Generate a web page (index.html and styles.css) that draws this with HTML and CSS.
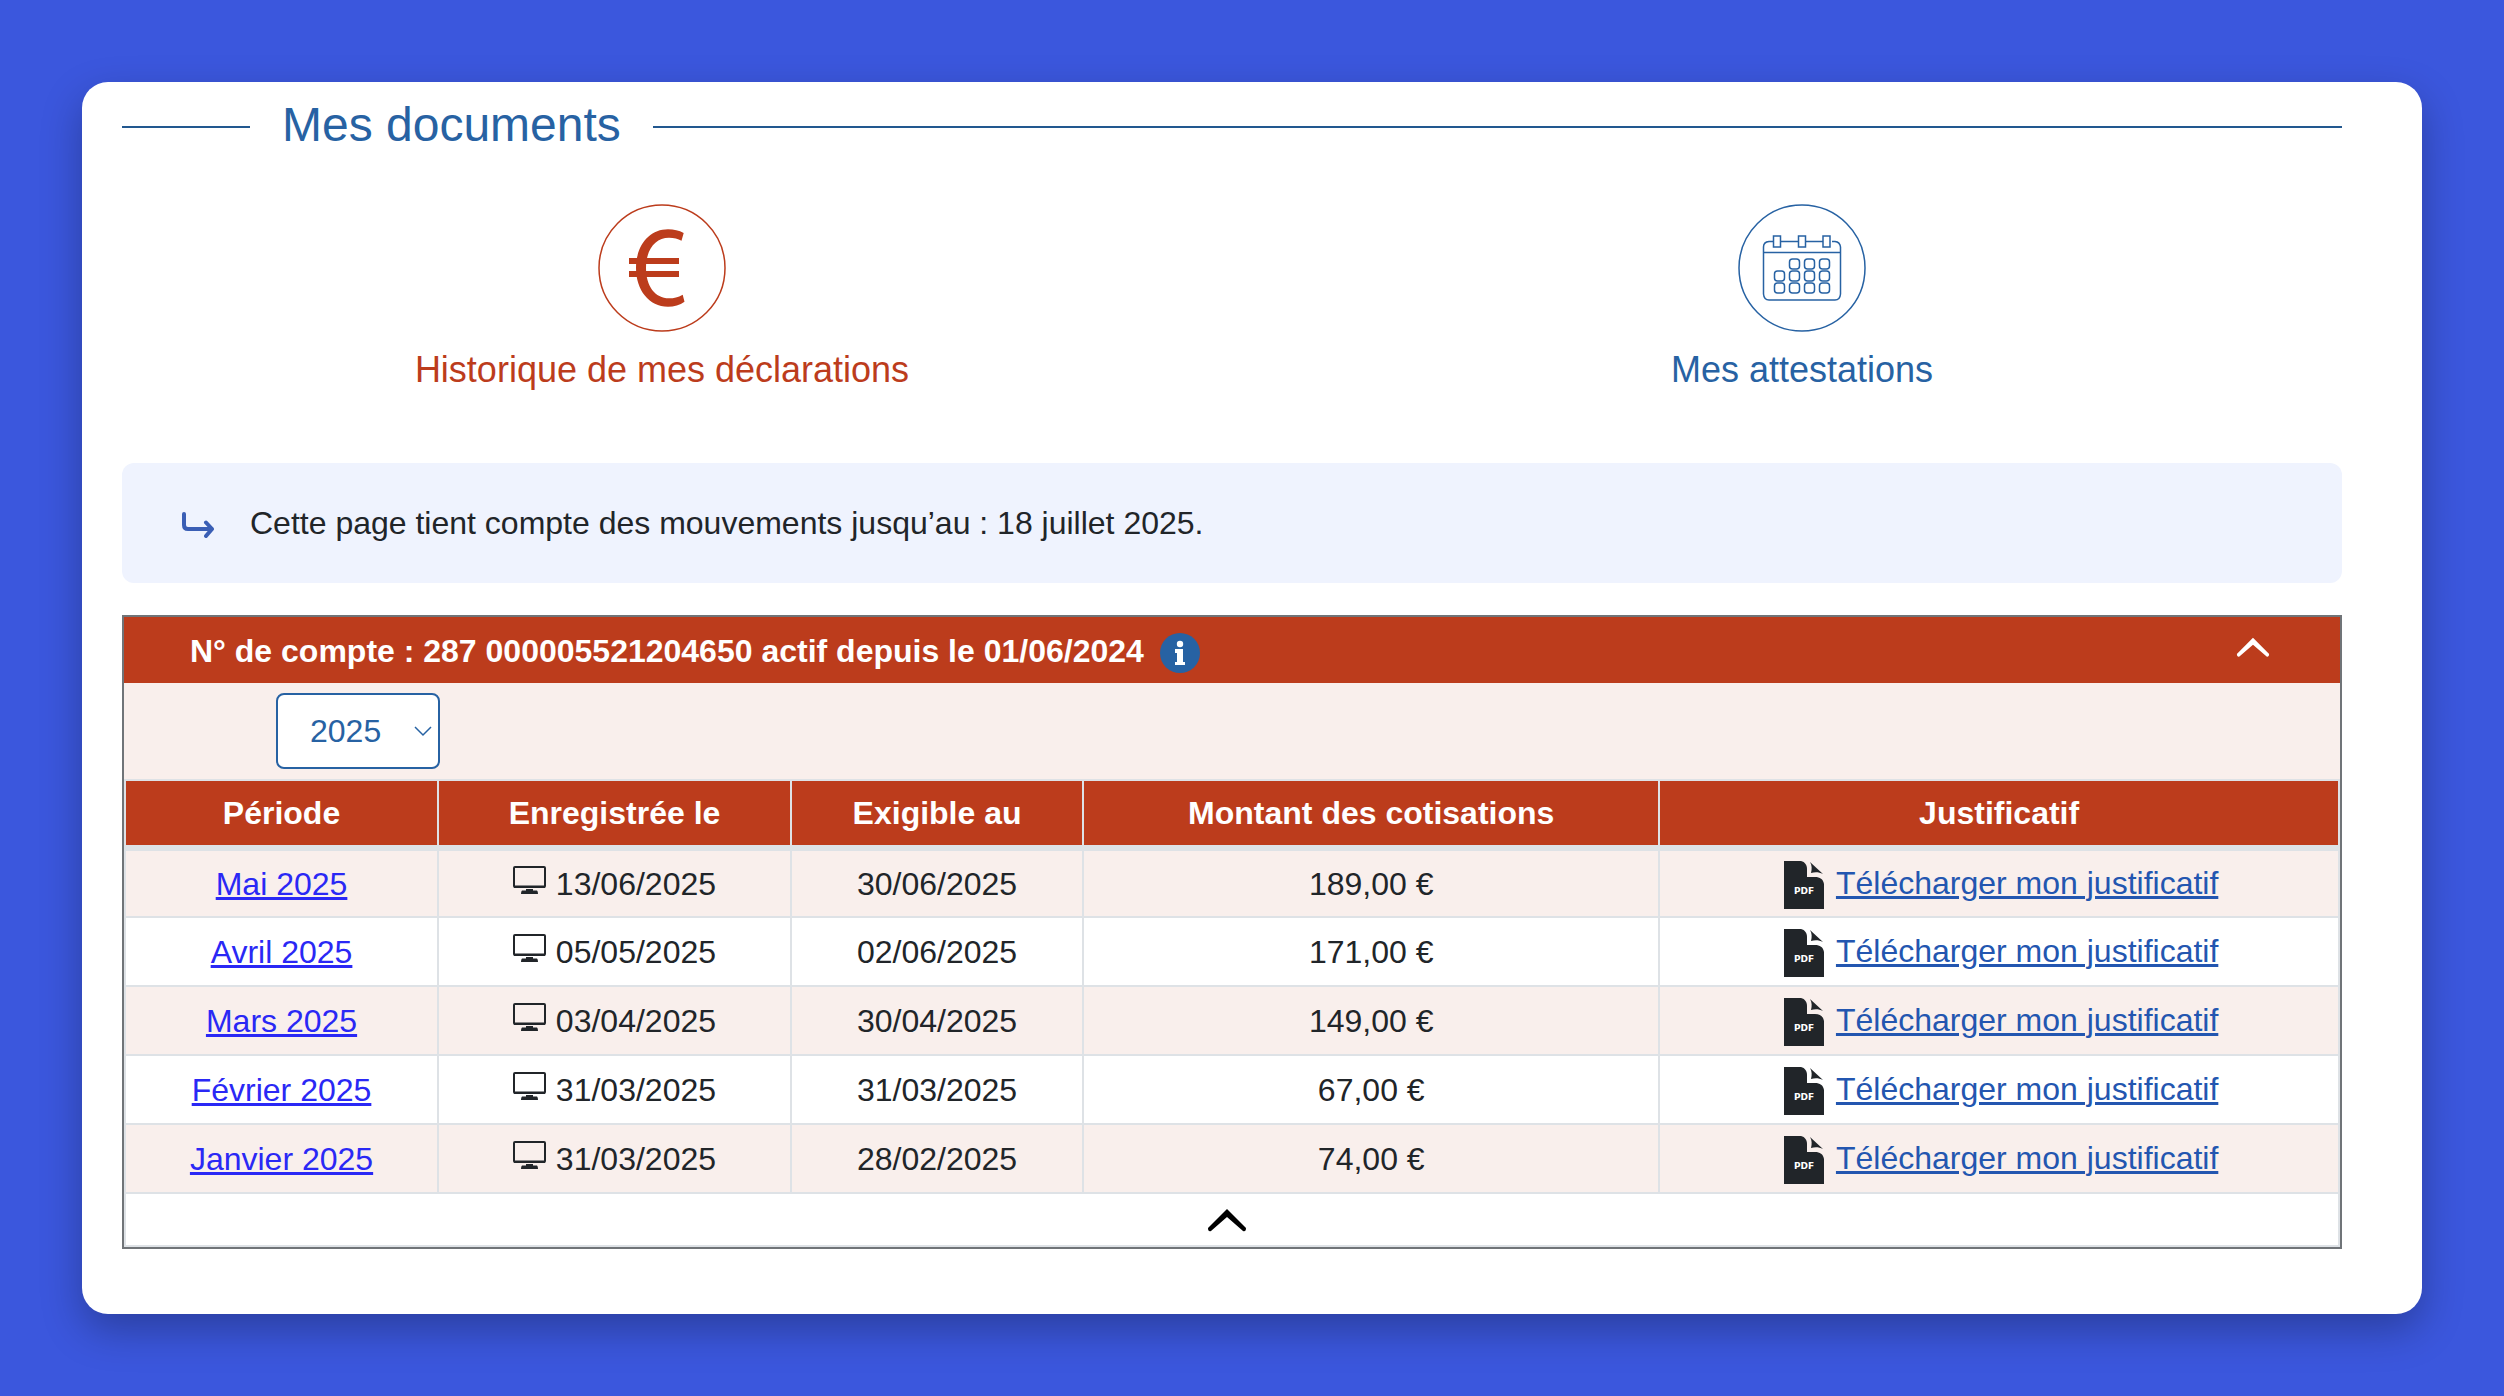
FILE: index.html
```html
<!DOCTYPE html>
<html lang="fr">
<head>
    <meta charset="UTF-8">
    <meta name="viewport" content="width=device-width, initial-scale=1.0">
    <title>Mes documents</title>

    <link rel="stylesheet" href="styles.css">
</head>
<body>

    <!-- Icônes réutilisées dans le tableau -->
    <svg class="sprite" aria-hidden="true">
        <symbol id="ecran" viewBox="0 0 34 28">
            <rect x="1" y="1" width="31" height="20" rx="1" fill="none" stroke="currentColor" stroke-width="2"/>
            <path d="M1 19.500H32V22H1ZM13 23H20V24.500H24Q25 25 25 28H8Q8 25 9 24.500H13Z" fill="currentColor"/>
        </symbol>
        <symbol id="pdf" viewBox="0 0 40 48">
            <path d="M0 0H17C21 1 23 4 23 8V16H31C36 16 39 18 40 23V48H0Z" fill="currentColor"/>
            <path d="M26 1L39 13C35 11 31 11 27 12C28 8 28 4 26 1Z" fill="currentColor"/>
            <text x="20" y="33" class="pdf-texte">PDF</text>
        </symbol>
    </svg>

    <main class="carte">
        <h1 class="titre">Mes documents</h1>

        <nav class="onglets">
            <a class="onglet actif" href="#declarations">
                <svg class="rond" viewBox="0 0 128 128" aria-hidden="true">
                    <circle cx="64" cy="64" r="63" fill="none" stroke="currentColor" stroke-width="1.5"/>
                    <path d="M85.700 29C81 26.500 76 25.300 70 25.300C51 25.300 38 42 38 64C38 86 51 102.700 70 102.700C76 102.700 82 101 86.500 97.700L84.700 90.700C80 93.300 76 94.300 71 94.300C57 94.300 48 82 48 64C48 46 57 33.700 71 33.700C76 33.700 80 34.700 83.500 36.700Z" fill="currentColor"/>
                    <path d="M31 54H81V60H31ZM31 67H81V73H31Z" fill="currentColor"/>
                </svg>
                <span>Historique de mes déclarations</span>
            </a>
            <a class="onglet" href="#attestations">
                <svg class="rond" viewBox="0 0 128 128" fill="none" stroke="currentColor" stroke-width="1.5" aria-hidden="true">
                    <circle cx="64" cy="64" r="63"/>
                    <path d="M35 37.500H31Q25.500 38 25.500 43V90Q26 96 31 96H97Q102 96 102.500 90V43Q102 38 97 37.500H94M43 37.500H60M68 37.500H85M25.500 48.500H102.500"/>
                    <path d="M35.500 32H42.500V43H35.500ZM60.500 32H67.500V43H60.500ZM85 32H92V43H85Z"/>
                    <g>
                        <rect x="51.500" y="55" width="10" height="10" rx="3"/>
                        <rect x="66.500" y="55" width="10" height="10" rx="3"/>
                        <rect x="81.500" y="55" width="10" height="10" rx="3"/>
                        <rect x="36.500" y="67" width="10" height="10" rx="3"/>
                        <rect x="51.500" y="67" width="10" height="10" rx="3"/>
                        <rect x="66.500" y="67" width="10" height="10" rx="3"/>
                        <rect x="81.500" y="67" width="10" height="10" rx="3"/>
                        <rect x="36.500" y="79" width="10" height="10" rx="3"/>
                        <rect x="51.500" y="79" width="10" height="10" rx="3"/>
                        <rect x="66.500" y="79" width="10" height="10" rx="3"/>
                        <rect x="81.500" y="79" width="10" height="10" rx="3"/>
                    </g>
                </svg>
                <span>Mes attestations</span>
            </a>
        </nav>

        <p class="info">
            <svg class="fleche" viewBox="0 0 32 26" aria-hidden="true">
                <path d="M2 2V13Q2 17 6 17H30M24 10.500L30 17L24 24" fill="none" stroke="currentColor" stroke-width="4" stroke-linecap="round" stroke-linejoin="round"/>
            </svg>
            Cette page tient compte des mouvements jusqu’au : 18 juillet 2025.
        </p>

        <section class="compte">
            <div class="compte-titre">
                <h2>N° de compte : 287 000005521204650 actif depuis le 01/06/2024</h2>
                <button class="bouton-info" aria-label="Informations sur le compte">
                    <svg viewBox="0 0 40 40" aria-hidden="true">
                        <circle cx="20" cy="20" r="20" fill="#2762a3"/>
                        <circle cx="20" cy="11" r="3.200" fill="#fff"/>
                        <path d="M15 16H23V29H25V32H15V29H17V20H15Z" fill="#fff"/>
                    </svg>
                </button>
                <button class="replier" aria-label="Replier le compte">
                    <svg viewBox="0 0 40 24" aria-hidden="true">
                        <path d="M20 1L39 20Q39 24 36 23L20 9L4 23Q1 24 1 20Z" fill="currentColor"/>
                    </svg>
                </button>
            </div>

            <div class="filtre">
                <select class="annee" aria-label="Année">
                    <option>2025</option>
                    <option>2024</option>
                </select>
                <svg class="annee-fleche" viewBox="0 0 20 12" aria-hidden="true">
                    <path d="M2 2L10 10L18 2" fill="none" stroke="currentColor" stroke-width="1.5"/>
                </svg>
            </div>

            <table class="declarations" id="declarations">
                <colgroup>
                    <col class="col-periode">
                    <col class="col-date">
                    <col class="col-exigible">
                    <col class="col-montant">
                    <col>
                </colgroup>
                <thead>
                    <tr>
                        <th scope="col">Période</th>
                        <th scope="col">Enregistrée le</th>
                        <th scope="col">Exigible au</th>
                        <th scope="col">Montant des cotisations</th>
                        <th scope="col">Justificatif</th>
                    </tr>
                </thead>
                <tbody>
                    <tr>
                        <td><a href="#mai">Mai 2025</a></td>
                        <td><svg class="ecran"><use href="#ecran"/></svg> 13/06/2025</td>
                        <td>30/06/2025</td>
                        <td>189,00 €</td>
                        <td><div class="fichier"><svg class="pdf"><use href="#pdf"/></svg><a href="#pdf-mai">Télécharger mon justificatif</a></div></td>
                    </tr>
                    <tr>
                        <td><a href="#avril">Avril 2025</a></td>
                        <td><svg class="ecran"><use href="#ecran"/></svg> 05/05/2025</td>
                        <td>02/06/2025</td>
                        <td>171,00 €</td>
                        <td><div class="fichier"><svg class="pdf"><use href="#pdf"/></svg><a href="#pdf-avril">Télécharger mon justificatif</a></div></td>
                    </tr>
                    <tr>
                        <td><a href="#mars">Mars 2025</a></td>
                        <td><svg class="ecran"><use href="#ecran"/></svg> 03/04/2025</td>
                        <td>30/04/2025</td>
                        <td>149,00 €</td>
                        <td><div class="fichier"><svg class="pdf"><use href="#pdf"/></svg><a href="#pdf-mars">Télécharger mon justificatif</a></div></td>
                    </tr>
                    <tr>
                        <td><a href="#fevrier">Février 2025</a></td>
                        <td><svg class="ecran"><use href="#ecran"/></svg> 31/03/2025</td>
                        <td>31/03/2025</td>
                        <td>67,00 €</td>
                        <td><div class="fichier"><svg class="pdf"><use href="#pdf"/></svg><a href="#pdf-fevrier">Télécharger mon justificatif</a></div></td>
                    </tr>
                    <tr>
                        <td><a href="#janvier">Janvier 2025</a></td>
                        <td><svg class="ecran"><use href="#ecran"/></svg> 31/03/2025</td>
                        <td>28/02/2025</td>
                        <td>74,00 €</td>
                        <td><div class="fichier"><svg class="pdf"><use href="#pdf"/></svg><a href="#pdf-janvier">Télécharger mon justificatif</a></div></td>
                    </tr>
                </tbody>
                <tfoot>
                    <tr>
                        <td colspan="5">
                            <button class="remonter" aria-label="Replier le tableau">
                                <svg viewBox="0 0 40 24" aria-hidden="true">
                                    <path d="M20 1L39 20Q39 24 36 23L20 9L4 23Q1 24 1 20Z" fill="currentColor"/>
                                </svg>
                            </button>
                        </td>
                    </tr>
                </tfoot>
            </table>
        </section>
    </main>

</body>
</html>
```
FILE: styles.css
```css
* {
    box-sizing: border-box;
}

body {
    margin: 0;
    padding: 82px;
    min-height: 100vh;
    background-color: #3b57dd;
    color: #212529;
    font-family: "Liberation Sans", Arial, sans-serif;
    font-size: 32px;
    line-height: 40px;
}

button {
    padding: 0;
    border: none;
    background: none;
    cursor: pointer;
}

svg {
    display: block;
}

.sprite {
    display: none;
}

.carte {
    padding: 14px 80px 65px 40px;
    background-color: white;
    border-radius: 26px;
    box-shadow: 0 16px 40px rgba(0, 0, 0, 0.28);
}

/* Titre entre deux traits */
.titre {
    display: flex;
    align-items: center;
    gap: 32px;
    margin: 0;
    color: #2762a3;
    font-size: 48px;
    font-weight: normal;
    line-height: 58px;
}

.titre::before,
.titre::after {
    content: "";
    width: 128px;
    height: 2px;
    margin-top: 4px;
    background-color: #22588f;
}

.titre::after {
    flex: 1;
}

/* Onglets */
.onglets {
    display: grid;
    grid-template-columns: 1fr 1fr;
    margin: 50px -30px 71px;
}

.onglet {
    display: flex;
    flex-direction: column;
    align-items: center;
    gap: 16px;
    color: #2762a3;
    font-size: 36px;
    line-height: 44px;
    text-decoration: none;
}

.onglet.actif {
    color: #bc3c1c;
}

.rond {
    width: 128px;
    height: 128px;
}

.info {
    display: flex;
    align-items: center;
    gap: 36px;
    margin: 0 0 32px;
    padding: 40px 60px;
    background-color: #eff3fe;
    border-radius: 12px;
}

.fleche {
    width: 32px;
    height: 26px;
    margin-top: 4px;
    color: #3a5eb5;
}

/* Compte */
.compte {
    border: 2px solid #707478;
}

.compte-titre {
    display: flex;
    align-items: center;
    height: 66px;
    padding: 2px 70px 0 66px;
    background-color: #bc3c1c;
    color: white;
}

.compte-titre h2 {
    margin: 0;
    font-size: 32px;
}

.bouton-info {
    width: 40px;
    height: 40px;
    margin: 4px 0 0 16px;
}

.replier {
    width: 34px;
    margin-left: auto;
    padding-bottom: 8px;
    color: white;
}

.filtre {
    display: flex;
    align-items: center;
    padding: 10px 152px;
    background-color: #f9efec;
}

.annee {
    appearance: none;
    width: 164px;
    height: 76px;
    padding: 0 32px;
    border: 2px solid #2762a3;
    border-radius: 8px;
    background-color: white;
    color: #2762a3;
    font-family: inherit;
    font-size: 32px;
}

.annee-fleche {
    width: 20px;
    height: 12px;
    margin-left: -27px;
    color: #2762a3;
    pointer-events: none;
}

.declarations {
    width: 100%;
    table-layout: fixed;
    border-collapse: collapse;
    text-align: center;
}

.col-periode {
    width: 14.14%;
}

.col-date {
    width: 15.94%;
}

.col-exigible {
    width: 13.2%;
}

.col-montant {
    width: 26.02%;
}

.declarations th,
.declarations td {
    padding: 0;
    border: 2px solid #dee2e6;
}

.declarations th {
    height: 68px;
    border-bottom-width: 6px;
    background-color: #bc3c1c;
    color: white;
}

.declarations tbody td {
    height: 69px;
}

.declarations tbody tr:nth-child(odd) {
    background-color: #f9efec;
}

.declarations a {
    color: #2a28f5;
}

.ecran {
    display: inline-block;
    width: 34px;
    height: 28px;
    vertical-align: 1px;
}

.fichier {
    display: flex;
    align-items: center;
    justify-content: center;
    gap: 12px;
    padding: 2px 0 0 4px;
}

.declarations .fichier a {
    padding-bottom: 4px;
    color: #2356b0;
}

.pdf {
    width: 40px;
    height: 48px;
}

.pdf-texte {
    fill: white;
    font-family: "DejaVu Sans", sans-serif;
    font-size: 9px;
    font-weight: bold;
    text-anchor: middle;
}

.declarations tfoot td {
    height: 53px;
    padding-right: 10px;
}

.remonter {
    display: block;
    width: 40px;
    margin: 0 auto;
    color: black;
}
```
